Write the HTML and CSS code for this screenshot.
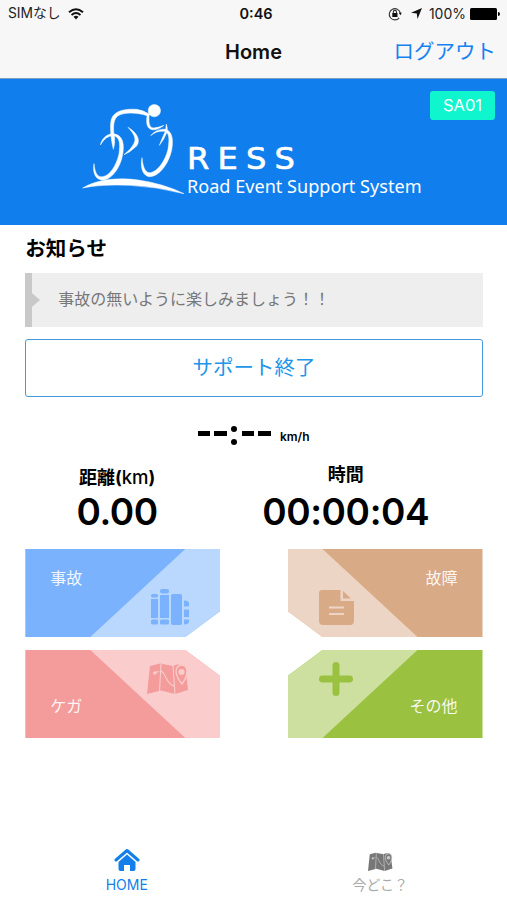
FILE: index.html
```html
<!DOCTYPE html>
<html lang="ja">
<head>
    <meta charset="UTF-8">
    <meta name="viewport" content="width=device-width, initial-scale=1.0">
    <title>Home</title>
    <link rel="stylesheet" href="styles.css">
</head>
<body>

    <svg width="0" height="0" class="defs">
        <symbol id="map" viewBox="0 0 42 34">
            <path fill="currentColor" d="M3 4 13 1.500 26 4 30 2.500 38 3 41 28 28 32 14 28.500 0 32z"/>
            <path class="line" d="M14 2 12.500 29M26 4 28 32M6 11 12 9.500M14 9C19 11 19 22 27 24" fill="none" stroke-width="1.100"/>
            <path class="pin" d="M35 22C31 17 29 13 29 9a5.500 6 0 0 1 11 0c0 4-2 9-5 13z" fill="currentColor" stroke-width="1.300"/>
            <circle class="dot" cx="34.500" cy="10" r="3"/>
            <circle class="dot" cx="8" cy="11" r="1.700"/>
        </symbol>
    </svg>

    <!-- Status bar -->
    <div class="status">
        <div class="status_left">
            <span>SIMなし</span>
            <svg width="16" height="12" viewBox="0 0 16 12" fill="none" stroke="#111" stroke-width="1.900">
                <path d="M1 4.300Q8-1.800 15 4.300M3.500 7Q8 3.200 12.500 7"/>
                <path d="M5.500 8.700Q8 6.900 10.500 8.700L8 11.500z" fill="#111" stroke="none"/>
            </svg>
        </div>
        <b>0:46</b>
        <div class="status_right">
            <svg width="14" height="14" viewBox="0 0 14 14" fill="none" stroke="#333" stroke-width="1.100">
                <path d="M11.200 10.800A5.600 5.600 0 1 1 12.300 6M5.300 6V5a1.600 1.600 0 0 1 3.200 0v1"/>
                <path d="M4.300 6h5.200v4H4.300zM10.800 5.800h3l-1.400 2.400z" fill="#111" stroke="none"/>
            </svg>
            <svg class="arrow" width="11" height="11" viewBox="0 0 11 11"><path d="M11 0 6.500 11 5.800 5.500 0 4.800z" fill="#111"/></svg>
            <span>100%</span>
            <svg width="30" height="12" viewBox="0 0 30 12"><rect width="27" height="12" rx="1.500"/><path d="M28 4q2 0 2 2t-2 2z"/></svg>
        </div>
    </div>

    <!-- Navigation bar -->
    <div class="navbar">
        <h1>Home</h1>
        <a class="logout">ログアウト</a>
    </div>

    <div class="banner">
        <svg class="logo" width="107" height="97" viewBox="30 30 321 291" fill="#fff" stroke="#fff" stroke-width="1.500">
            <circle cx="253" cy="62" r="18.500"/>
            <path d="M130 178C122 145 119 105 124 88C132 60 170 56 200 58Q218 60 238 72Q236 84 237 95Q238 112 250 114Q266 113 282 106Q262 122 246 119C228 114 229 95 231 77C204 68 160 65 142 79C127 92 130 125 134 145Q135 165 130 178z"/>
            <path d="M91 165C98 138 118 129 134 132C158 136 165 163 157 198C149 238 121 272 96 270C76 268 67 247 72 221C75 249 82 263 99 260C120 257 139 226 147 192C152 158 148 140 130 137Q107 137 91 165z"/>
            <path d="M242 137C255 121 275 115 289 119C306 125 311 148 305 180C296 222 267 260 239 260C218 258 210 232 216 203C219 234 227 250 242 248C262 245 286 213 294 178C299 147 298 129 284 124Q261 121 242 137z"/>
            <path d="M174 112C211 134 212 162 193 174Q181 186 162 194Q186 175 192 160C200 144 190 130 174 112zM289 102Q294 115 291 126Q283 148 268 166Q277 143 286 124z"/>
            <path d="M38 294C83 267 145 262 205 270Q281 281 342 311Q259 290 180 286Q93 282 38 294z"/>
        </svg>
        <div class="brand">
            <div class="brand_name">RESS</div>
            <div class="brand_sub">Road Event Support System</div>
        </div>
        <span class="badge">SA01</span>
    </div>

    <div class="content">
        <h2>お知らせ</h2>
        <div class="notice">事故の無いように楽しみましょう！！</div>
        <button class="finish">サポート終了</button>

        <div class="speed">
            <div class="speed_value"><i></i><i></i><em></em><i></i><i></i></div>
            <span>km/h</span>
        </div>

        <div class="stats">
            <div class="distance">
                <div class="label">距離(<span>km</span>)</div>
                <div class="value">0.00</div>
            </div>
            <div class="time">
                <div class="label">時間</div>
                <div class="value">00:00:04</div>
            </div>
        </div>

        <div class="cards">
            <div class="card accident">
                <span>事故</span>
                <svg width="38" height="38" viewBox="0 0 38 38" fill="currentColor">
                    <rect y="6" width="7" height="3.500" rx="1.500"/><rect y="11" width="7" height="19"/><rect y="31.500" width="7" height="5" rx="1.500"/>
                    <rect x="9" y="1" width="9" height="4.500" rx="2"/><rect x="9" y="7" width="9" height="23"/><rect x="9" y="31.500" width="9" height="5" rx="1.500"/>
                    <rect x="20" y="6" width="11" height="31" rx="2"/>
                    <path d="M33 12.500q5 0 5 3v3h-5zM33 21.500h5V29h-5zM33 31.500h5v2q0 3-5 3z"/>
                </svg>
            </div>
            <div class="card trouble">
                <svg width="35" height="35" viewBox="0 0 35 35">
                    <path d="M3 0h18.500v11H35v20q0 4-4 4H4q-4 0-4-4V3q0-3 3-3zM24 1l8 7.500h-8z" fill="currentColor"/>
                    <path d="M10 17.500h15M10 24h15" stroke="#edd5c5" stroke-width="2.200"/>
                </svg>
                <span>故障</span>
            </div>
            <div class="card injury">
                <span>ケガ</span>
                <svg width="42" height="34"><use href="#map"/></svg>
            </div>
            <div class="card other">
                <svg width="34" height="34" viewBox="0 0 34 34"><path d="M17 3.500v27M3.500 17h27" stroke="currentColor" stroke-width="7" stroke-linecap="round"/></svg>
                <span>その他</span>
            </div>
        </div>
    </div>

    <!-- Tab bar -->
    <div class="tabs">
        <div class="tab active">
            <svg width="26" height="24" viewBox="0 0 26 24">
                <path d="M2 12 13 2.500 24 12" fill="none" stroke="currentColor" stroke-width="3" stroke-linecap="round" stroke-linejoin="round"/>
                <path d="M13 6.500 21.500 14v7q0 2-2 2H16v-6h-6v6H6.500q-2 0-2-2v-7z" fill="currentColor"/>
            </svg>
            <span>HOME</span>
        </div>
        <div class="tab">
            <svg width="25" height="24" class="tab_map"><use href="#map"/></svg>
            <span>今どこ？</span>
        </div>
    </div>

</body>
</html>
```
FILE: styles.css
```css
* {
    box-sizing: border-box;
}
body {
    margin: 0;
    height: 900px;
    display: flex;
    flex-direction: column;
    overflow: hidden;
    background: #fff;
    color: #000;
    font-family: Inter, "Noto Sans CJK JP", sans-serif;
}
svg {
    display: block;
    flex: none;
}
.defs {
    position: absolute;
}

/* Status bar */
.status {
    display: grid;
    grid-template-columns: 1fr auto 1fr;
    align-items: center;
    height: 27px;
    padding: 0 7px 0 8px;
    background: #f7f7f7;
    font-size: 14px;
    line-height: 27px;
    color: #222;
}
.status b {
    padding-left: 4px;
    font-weight: 600;
    font-size: 14.500px;
    color: #111;
}
.status_left,
.status_right {
    display: flex;
    align-items: center;
}
.status_left {
    gap: 7px;
    font-size: 13.800px;
}
.status_right {
    justify-content: flex-end;
    gap: 4px;
}
.arrow {
    margin: 0 3px 0 5px;
}

/* Navigation bar */
.navbar {
    display: grid;
    grid-template-columns: 1fr auto 1fr;
    align-items: center;
    height: 52px;
    padding: 0 11px 2px;
    background: #f7f7f7;
    border-bottom: 1px solid #7d9dbf;
}
.navbar h1 {
    grid-column: 2;
    margin: 0;
    font-size: 20px;
    font-weight: 600;
    line-height: 48px;
    color: #111;
}
.logout {
    justify-self: end;
    font-size: 20.500px;
    line-height: 44px;
    color: #1482f0;
}

.banner {
    position: relative;
    display: flex;
    height: 146px;
    padding: 21px 0 0 80px;
    background: #107eec;
    color: #fff;
}
.brand {
    padding-top: 41px;
}
.brand_name {
    height: 34px;
    font-family: "DejaVu Sans", sans-serif;
    font-size: 29.500px;
    line-height: 36px;
    letter-spacing: 7.500px;
    -webkit-text-stroke: .6px #fff;
    transform: scaleX(1.09);
    transform-origin: 0 0;
}
.brand_sub {
    font-family: "Noto Sans", sans-serif;
    font-size: 18.100px;
    line-height: 22px;
    white-space: nowrap;
}
.badge {
    position: absolute;
    top: 12px;
    right: 12px;
    width: 65px;
    border-radius: 3px;
    background: #0ff5cd;
    font-size: 16.500px;
    line-height: 29px;
    text-align: center;
}

.content {
    padding: 0 24.500px 0 25.300px;
}
h2 {
    margin: 0;
    font-size: 20.500px;
    font-weight: 700;
    line-height: 48px;
}
.notice {
    position: relative;
    height: 54px;
    padding-left: 26px;
    border-left: 7px solid #c9c9c9;
    background: #eee;
    font-size: 16px;
    line-height: 52px;
    color: #777;
}
.notice::before {
    content: "";
    position: absolute;
    left: 0;
    top: 20px;
    border: 7px solid transparent;
    border-left: 8px solid #c9c9c9;
    border-right: 0;
}
.finish {
    display: block;
    width: 100%;
    height: 58px;
    margin-top: 12px;
    padding: 0 0 4px;
    border: 1.500px solid #419bdd;
    border-radius: 3px;
    background: #fff;
    color: #2195e8;
    font-family: inherit;
    font-size: 20.500px;
}

/* Speed, distance and time */
.speed {
    display: flex;
    height: 65px;
    padding: 28px 0 0 172.700px;
    font-size: 12px;
    font-weight: 600;
}
.speed_value {
    display: flex;
    align-items: center;
    gap: 4px;
    height: 18px;
    margin-right: 9px;
}
.speed_value i {
    width: 12.500px;
    height: 5px;
    margin-top: -1px;
    background: #000;
}
.speed_value em {
    display: flex;
    flex-direction: column;
    justify-content: space-between;
    width: 6px;
    height: 19px;
    margin: 2px 1px 0 0;
}
.speed_value em::before,
.speed_value em::after {
    content: "";
    height: 6px;
    border-radius: 50%;
    background: #000;
}
.speed span {
    font-size: 12px;
    line-height: 24px;
}
.stats {
    display: flex;
    height: 87px;
}
.distance {
    width: 184px;
    padding-top: 2px;
}
.time {
    width: 274px;
}
.stats .label {
    height: 28px;
    font-size: 18px;
    font-weight: 700;
    line-height: 26px;
    text-align: center;
}
.label span {
    font-size: 18.500px;
    font-weight: 500;
}
.stats .value {
    font-size: 37px;
    font-weight: 600;
    letter-spacing: -.4px;
    line-height: 44px;
    text-align: center;
    white-space: nowrap;
}
.distance .value {
    margin-top: -2px;
}

/* Report buttons */
.cards {
    display: grid;
    grid-template-columns: 195px 195px;
    grid-auto-rows: 88px;
    justify-content: space-between;
    row-gap: 13px;
}
.card {
    position: relative;
    z-index: 0;
    display: flex;
    justify-content: space-between;
    font-size: 16px;
    line-height: 24px;
}
.card span {
    color: #fff;
    opacity: .9;
}
/* light corner behind each icon */
.card::before {
    content: "";
    position: absolute;
    inset: 0;
    z-index: -1;
}
.accident,
.trouble {
    padding-top: 17px;
}
.injury,
.other {
    padding-top: 44px;
}
.accident,
.injury {
    padding-left: 25px;
    padding-right: 31px;
}
.trouble,
.other {
    padding-left: 31px;
    padding-right: 25px;
}
.accident {
    background: #7ab2fd;
    color: #7ab2fd;
    clip-path: polygon(0 0, 100% 0, 100% 62px, 160px 100%, 0 100%);
}
.accident::before {
    background: #bad8fe;
    clip-path: polygon(160px 0, 100% 0, 100% 100%, 65px 100%);
}
.trouble {
    background: #d9aa86;
    color: #d9aa86;
    clip-path: polygon(0 0, 100% 0, 100% 100%, 35px 100%, 0 62px);
}
.trouble::before {
    background: #edd5c5;
    clip-path: polygon(0 0, 35px 0, 130px 100%, 0 100%);
}
.injury {
    background: #f49b9b;
    color: #f49b9b;
    clip-path: polygon(0 0, 160px 0, 100% 26px, 100% 100%, 0 100%);
}
.injury::before {
    background: #facccc;
    clip-path: polygon(65px 0, 100% 0, 100% 100%, 160px 100%);
}
.other {
    background: #9bc141;
    color: #9bc141;
    clip-path: polygon(35px 0, 100% 0, 100% 100%, 0 100%, 0 26px);
}
.other::before {
    background: #cde0a0;
    clip-path: polygon(0 0, 130px 0, 35px 100%, 0 100%);
}
.accident svg {
    margin-top: 22px;
}
.trouble svg {
    margin-top: 24px;
}
.injury svg {
    --gap: #facccc;
    margin-top: -32px;
}
.other svg {
    margin-top: -32px;
}
.line,
.pin {
    stroke: var(--gap);
}
.dot {
    fill: var(--gap);
}

/* Tab bar */
.tabs {
    display: flex;
    margin-top: auto;
    height: 53px;
}
.tab {
    display: flex;
    flex: 1;
    flex-direction: column;
    align-items: center;
    gap: 3px;
    padding-top: 1px;
    color: #aaa;
    font-size: 14px;
    line-height: 20px;
}
.tab svg {
    color: #777;
}
.tab_map {
    --gap: #ccc;
    margin: 2px 0 -2px;
}
.tab.active,
.tab.active svg {
    color: #147fea;
}
```
